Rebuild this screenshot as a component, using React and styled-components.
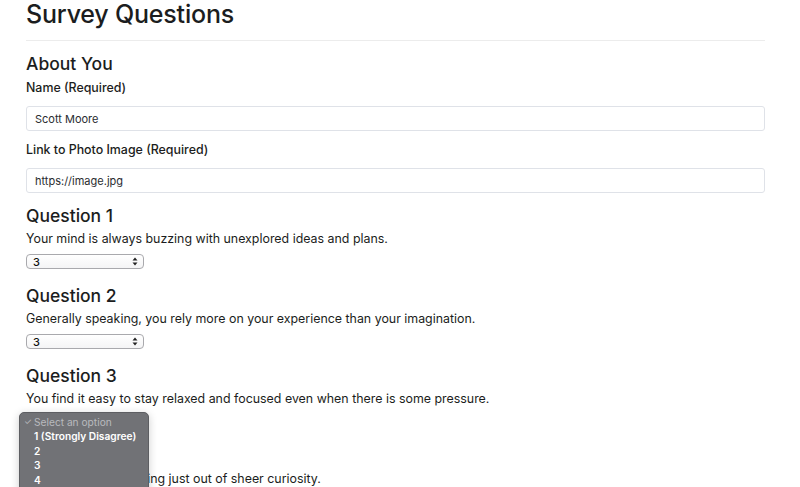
import React from 'react'
import styled, { createGlobalStyle } from 'styled-components'

const GlobalStyle = createGlobalStyle`
  html, body {
    margin: 0;
    padding: 0;
    background: #fff;
  }
  body {
    font-family: Inter, "Noto Sans", "Liberation Sans", sans-serif;
    color: #1b1d20;
    overflow: hidden;
  }
`

const Page = styled.div`
  padding: 0 35px 0 26px;
`

const Title = styled.h1`
  margin: -1px 0 0;
  font-size: 25px;
  line-height: 30px;
  font-weight: 500;
  letter-spacing: -0.2px;
`

const Rule = styled.hr`
  margin: 11px 0 12px;
  border: 0;
  border-top: 1px solid #ececec;
`

const SectionTitle = styled.h2`
  margin: 0;
  font-size: 17.5px;
  line-height: 22px;
  font-weight: 500;
`

const Label = styled.label`
  display: block;
  margin-top: ${(p) => p.$top || 4}px;
  font-size: 12.4px;
  line-height: 18px;
  font-weight: 500;
`

const TextInput = styled.div`
  margin-top: 9px;
  height: 23px;
  border: 1px solid #dfe2e8;
  border-radius: 3px;
  padding: 0 8px;
  display: flex;
  align-items: center;
  font-size: 11px;
  color: #2a2c30;
`

const Question = styled.section`
  margin-top: ${(p) => p.$top || 16}px;
`

const Prompt = styled.p`
  margin: 3px 0 0;
  font-size: 12.4px;
  line-height: 18px;
  font-weight: 400;
`

const SelectWrap = styled.div`
  position: relative;
  margin-top: 6px;
  width: 118px;
  height: 15px;
`

const Select = styled.div`
  box-sizing: border-box;
  width: 100%;
  height: 100%;
  border: 1px solid #a9a9ad;
  border-radius: 4px;
  background: linear-gradient(#ffffff, #f4f4f5);
  padding: 0 5px 0 6px;
  display: flex;
  align-items: center;
  justify-content: space-between;
  font-size: 11px;
  font-weight: 500;
  color: #111;
  visibility: ${(p) => (p.$hidden ? 'hidden' : 'visible')};
`

const Popup = styled.ul`
  position: absolute;
  z-index: 5;
  left: -7px;
  top: -2px;
  width: 130px;
  height: 90px;
  margin: 0;
  padding: 1.5px 0 0;
  list-style: none;
  box-sizing: border-box;
  background: #717276;
  border: 1px solid #5d5e62;
  border-radius: 5px;
  box-shadow: 0 2px 8px rgba(0, 0, 0, 0.2);
`

const Option = styled.li`
  position: relative;
  padding-left: 14px;
  font-size: 10.2px;
  line-height: 14.5px;
  font-weight: ${(p) => (p.$muted ? 400 : 600)};
  color: ${(p) => (p.$muted ? '#b9babe' : '#ffffff')};
`

const Check = styled.span`
  position: absolute;
  left: 4px;
  font-size: 9px;
`

const Arrows = () => (
  <svg width="6" height="9" viewBox="0 0 6 9">
    <path d="M3 0.5 L5.5 3.5 H0.5 Z" fill="#222" />
    <path d="M3 8.5 L5.5 5.5 H0.5 Z" fill="#222" />
  </svg>
)

const questions = [
  { n: 1, text: 'Your mind is always buzzing with unexplored ideas and plans.', value: '3' },
  { n: 2, text: 'Generally speaking, you rely more on your experience than your imagination.', value: '3' },
  { n: 3, text: 'You find it easy to stay relaxed and focused even when there is some pressure.', value: '', open: true },
  { n: 4, text: 'You often do something just out of sheer curiosity.', value: '' },
]

const options = ['1 (Strongly Disagree)', '2', '3', '4', '5 (Strongly Agree)']

export default function App() {
  return (
    <Page>
      <GlobalStyle />
      <Title>Survey Questions</Title>
      <Rule />
      <SectionTitle>About You</SectionTitle>
      <Label>Name (Required)</Label>
      <TextInput>Scott Moore</TextInput>
      <Label $top={10}>Link to Photo Image (Required)</Label>
      <TextInput>https://image.jpg</TextInput>
      {questions.map((q, i) => (
        <Question key={q.n} $top={i === 0 ? 12 : 16}>
          <SectionTitle>Question {q.n}</SectionTitle>
          <Prompt>{q.text}</Prompt>
          <SelectWrap>
            <Select $hidden={q.open}>
              <span>{q.value}</span>
              <Arrows />
            </Select>
            {q.open && (
              <Popup>
                <Option $muted>
                  <Check>✓</Check>
                  Select an option
                </Option>
                {options.map((o) => (
                  <Option key={o}>{o}</Option>
                ))}
              </Popup>
            )}
          </SelectWrap>
        </Question>
      ))}
    </Page>
  )
}
